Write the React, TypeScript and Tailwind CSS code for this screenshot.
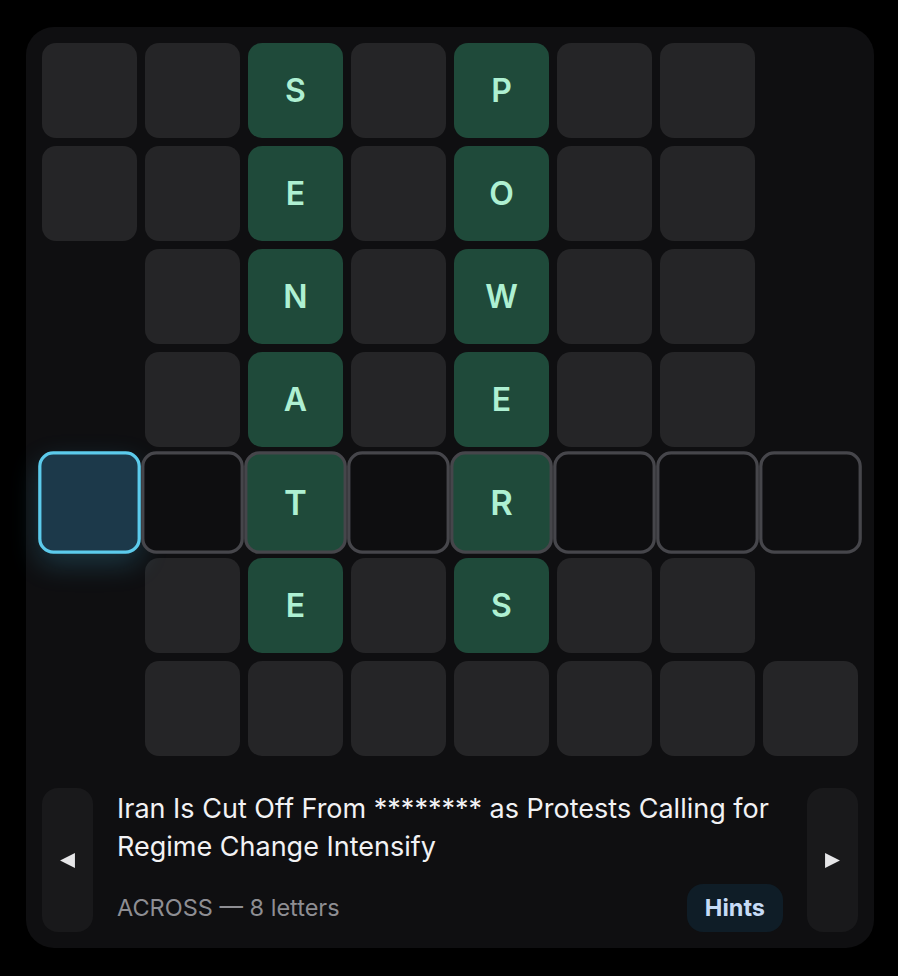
import React from "react";

// '#' = no cell, '.' = empty cell, letter = solved cell
const ROWS = [
  "..S.P..#",
  "..E.O..#",
  "#.N.W..#",
  "#.A.E..#",
  "..T.R...",
  "#.E.S..#",
  "#.......",
];

const ACTIVE_ROW = 4;
const SELECTED_COL = 0;

function Cell({ ch, active, selected }: { ch: string; active: boolean; selected: boolean }) {
  if (ch === "#") return <div className="h-[95px] w-[95px]" />;
  const solved = ch !== ".";
  let cls = "flex h-[95px] w-[95px] items-center justify-center rounded-[14px] text-[32px] font-semibold text-[#aef0d2]";
  if (active) {
    cls += " scale-[1.08] border-[3px]";
    if (selected) {
      cls += " border-[#5ccbec] bg-[#1c394a] shadow-[0_10px_26px_rgba(70,190,235,0.22)]";
    } else if (solved) {
      cls += " border-[#46464b] bg-[#1f4a3a]";
    } else {
      cls += " border-[#46464b] bg-[#0e0e10]";
    }
  } else {
    cls += solved ? " bg-[#1f4a3a]" : " bg-[#252527]";
  }
  return <div className={cls}>{solved ? ch : ""}</div>;
}

function Arrow({ dir }: { dir: "left" | "right" }) {
  return (
    <svg width="17" height="17" viewBox="0 0 16 16" className="text-[#e6e6e8]">
      {dir === "left" ? (
        <path d="M1 8 L15 1 L15 15 Z" fill="currentColor" />
      ) : (
        <path d="M15 8 L1 1 L1 15 Z" fill="currentColor" />
      )}
    </svg>
  );
}

export default function App() {
  return (
    <div className="min-h-[976px] bg-black pt-[27px]" style={{ fontFamily: "Inter, 'Noto Sans', sans-serif" }}>
      <div className="ml-[26px] w-[848px] rounded-[28px] bg-[#0f0f11] p-4">
        <div className="grid grid-cols-[repeat(8,95px)] gap-2">
          {ROWS.map((row, r) =>
            row.split("").map((ch, c) => (
              <Cell
                key={`${r}-${c}`}
                ch={ch}
                active={r === ACTIVE_ROW}
                selected={r === ACTIVE_ROW && c === SELECTED_COL}
              />
            ))
          )}
        </div>

        <div className="mt-8 flex h-[144px] gap-6">
          <button className="flex w-[51px] shrink-0 items-center justify-center rounded-2xl bg-[#19191b]">
            <Arrow dir="left" />
          </button>
          <div className="flex flex-1 flex-col justify-between">
            <p className="pt-[2px] text-[27px] leading-[38px] text-[#f2f2f4]">
              Iran Is Cut Off From ******** as Protests Calling for Regime Change Intensify
            </p>
            <div className="flex items-center justify-between">
              <span className="text-[23.5px] text-[#8e8e93]">ACROSS — 8 letters</span>
              <button className="h-12 rounded-2xl bg-[#0f1d27] px-[18px] text-[23.5px] font-bold text-[#c6dbf6]">
                Hints
              </button>
            </div>
          </div>
          <button className="flex w-[51px] shrink-0 items-center justify-center rounded-2xl bg-[#19191b]">
            <Arrow dir="right" />
          </button>
        </div>
      </div>
    </div>
  );
}
